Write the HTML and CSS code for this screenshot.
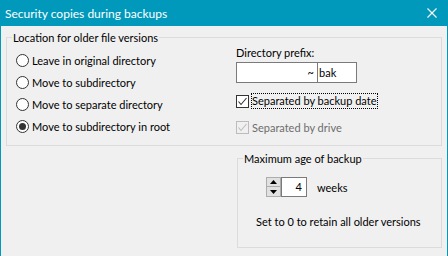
FILE: index.html
```html
<!DOCTYPE html>
<html lang="en">
<head>
    <meta charset="UTF-8">
    <title>Security copies during backups</title>
    <link rel="stylesheet" href="styles.css">
</head>
<body>
    <div class="window">
        <div class="titlebar">
            <span class="title">Security copies during backups</span>
            <svg class="close" width="10" height="10" viewBox="0 0 10 10">
                <path d="M0.5 0.5 L9.5 9.5 M9.5 0.5 L0.5 9.5" stroke="#fff" stroke-width="1.1" fill="none"/>
            </svg>
        </div>
        <div class="client">
            <fieldset class="group location">
                <legend>Location for older file versions</legend>
                <div class="location-body">
                    <div class="options">
                        <label class="radio"><span class="radio-box"></span>Leave in original directory</label>
                        <label class="radio"><span class="radio-box"></span>Move to subdirectory</label>
                        <label class="radio"><span class="radio-box"></span>Move to separate directory</label>
                        <label class="radio"><span class="radio-box checked"></span>Move to subdirectory in root</label>
                    </div>
                    <div class="prefix">
                        <div class="field-label">Directory prefix:</div>
                        <div class="prefix-input">
                            <span class="prefix-left">~</span>
                            <span class="prefix-right">bak</span>
                        </div>
                        <label class="check">
                            <span class="check-box">
                                <svg width="11" height="11" viewBox="0 0 11 11"><path d="M1.5 5.5 L4 8.5 L9.5 2" stroke="#333" stroke-width="1.1" fill="none"/></svg>
                            </span>
                            <span class="focus">Separated by backup date</span>
                        </label>
                        <label class="check disabled">
                            <span class="check-box">
                                <svg width="11" height="11" viewBox="0 0 11 11"><path d="M1.5 5.5 L4 8.5 L9.5 2" stroke="#bcbcbc" stroke-width="1.1" fill="none"/></svg>
                            </span>
                            <span class="check-text">Separated by drive</span>
                        </label>
                    </div>
                </div>
            </fieldset>

            <fieldset class="group age">
                <legend>Maximum age of backup</legend>
                <div class="spin-row">
                    <div class="spinner">
                        <span class="spin-btn"><svg width="7" height="4" viewBox="0 0 7 4"><path d="M0 4 L3.5 0 L7 4 Z" fill="#000"/></svg></span>
                        <span class="spin-btn"><svg width="7" height="4" viewBox="0 0 7 4"><path d="M0 0 L7 0 L3.5 4 Z" fill="#000"/></svg></span>
                    </div>
                    <div class="spin-value">4</div>
                    <span class="unit">weeks</span>
                </div>
                <div class="hint">Set to 0 to retain all older versions</div>
            </fieldset>
        </div>
    </div>
</body>
</html>
```

FILE: styles.css
```css
* {
    box-sizing: border-box;
}

body {
    margin: 0;
    font-family: Lato, "Liberation Sans", sans-serif;
    font-size: 11px;
    color: #000;
}

.window {
    width: 448px;
    height: 256px;
    background: #f0f0f0;
    overflow: hidden;
}

/* Title bar */
.titlebar {
    height: 26px;
    background: #0099bc;
    color: #fff;
    display: flex;
    align-items: center;
    padding-left: 5px;
}

.title {
    font-size: 12px;
}

.close {
    margin-left: auto;
    margin-right: 11px;
}

.client {
    height: 230px;
    border-left: 1px solid #0099bc;
    border-right: 1px solid #0099bc;
    padding-top: 4px;
}

/* Group boxes */
.group {
    border: 1px solid #dcdcdc;
    margin: 0 5px;
    padding: 1px 0 0 5px;
    min-width: 0;
}

.group legend {
    padding: 0 1px;
    line-height: 15px;
}

.location {
    height: 116px;
}

.location-body {
    display: grid;
    grid-template-columns: 220px 1fr;
    margin-left: 4px;
}

.options {
    margin-top: 3px;
}

.radio {
    display: flex;
    align-items: center;
    gap: 3px;
    height: 22px;
}

.radio-box {
    width: 13px;
    height: 13px;
    border: 1px solid #333;
    border-radius: 50%;
    background: #fff;
    display: flex;
    align-items: center;
    justify-content: center;
}

.radio-box.checked::after {
    content: "";
    width: 7px;
    height: 7px;
    border-radius: 50%;
    background: #333;
}

/* Directory prefix column */
.field-label {
    line-height: 14px;
}

.prefix-input {
    display: flex;
    margin-top: 2px;
    width: 121px;
    height: 21px;
    border: 1px solid #7a7a7a;
    background: #fff;
    line-height: 19px;
}

.prefix-left {
    width: 81px;
    text-align: right;
    padding-right: 3px;
    border-right: 1px solid #7a7a7a;
}

.prefix-right {
    padding-left: 1px;
}

.check {
    display: flex;
    align-items: center;
    height: 16px;
    margin-top: 10px;
}

.check-box {
    width: 13px;
    height: 13px;
    border: 1px solid #333;
    background: #fff;
    display: flex;
}

.check-box svg {
    display: block;
}

.focus {
    margin-left: 2px;
    border: 1px dotted #000;
    padding-right: 1px;
    line-height: 14px;
}

.check.disabled .check-box {
    border-color: #bcbcbc;
    background: #f0f0f0;
}

.check-text {
    margin-left: 3px;
    color: #6d6d6d;
}

/* Maximum age group */
.age {
    margin: 5px 0 0 236px;
    width: 205px;
    height: 97px;
}

.spin-row {
    display: flex;
    align-items: center;
    margin: 10px 0 0 23px;
    height: 20px;
}

.spinner {
    display: flex;
    flex-direction: column;
    width: 15px;
    height: 20px;
}

.spin-btn {
    height: 10px;
    border: 1px solid #adadad;
    background: #e1e1e1;
    display: flex;
    align-items: center;
    justify-content: center;
}

.spin-btn + .spin-btn {
    border-top: none;
}

.spin-value {
    width: 26px;
    height: 20px;
    border: 1px solid #7a7a7a;
    background: #fff;
    text-align: right;
    padding-right: 4px;
    line-height: 18px;
}

.unit {
    margin-left: 10px;
}

.hint {
    margin: 18px 0 0 13px;
    line-height: 14px;
}
```
